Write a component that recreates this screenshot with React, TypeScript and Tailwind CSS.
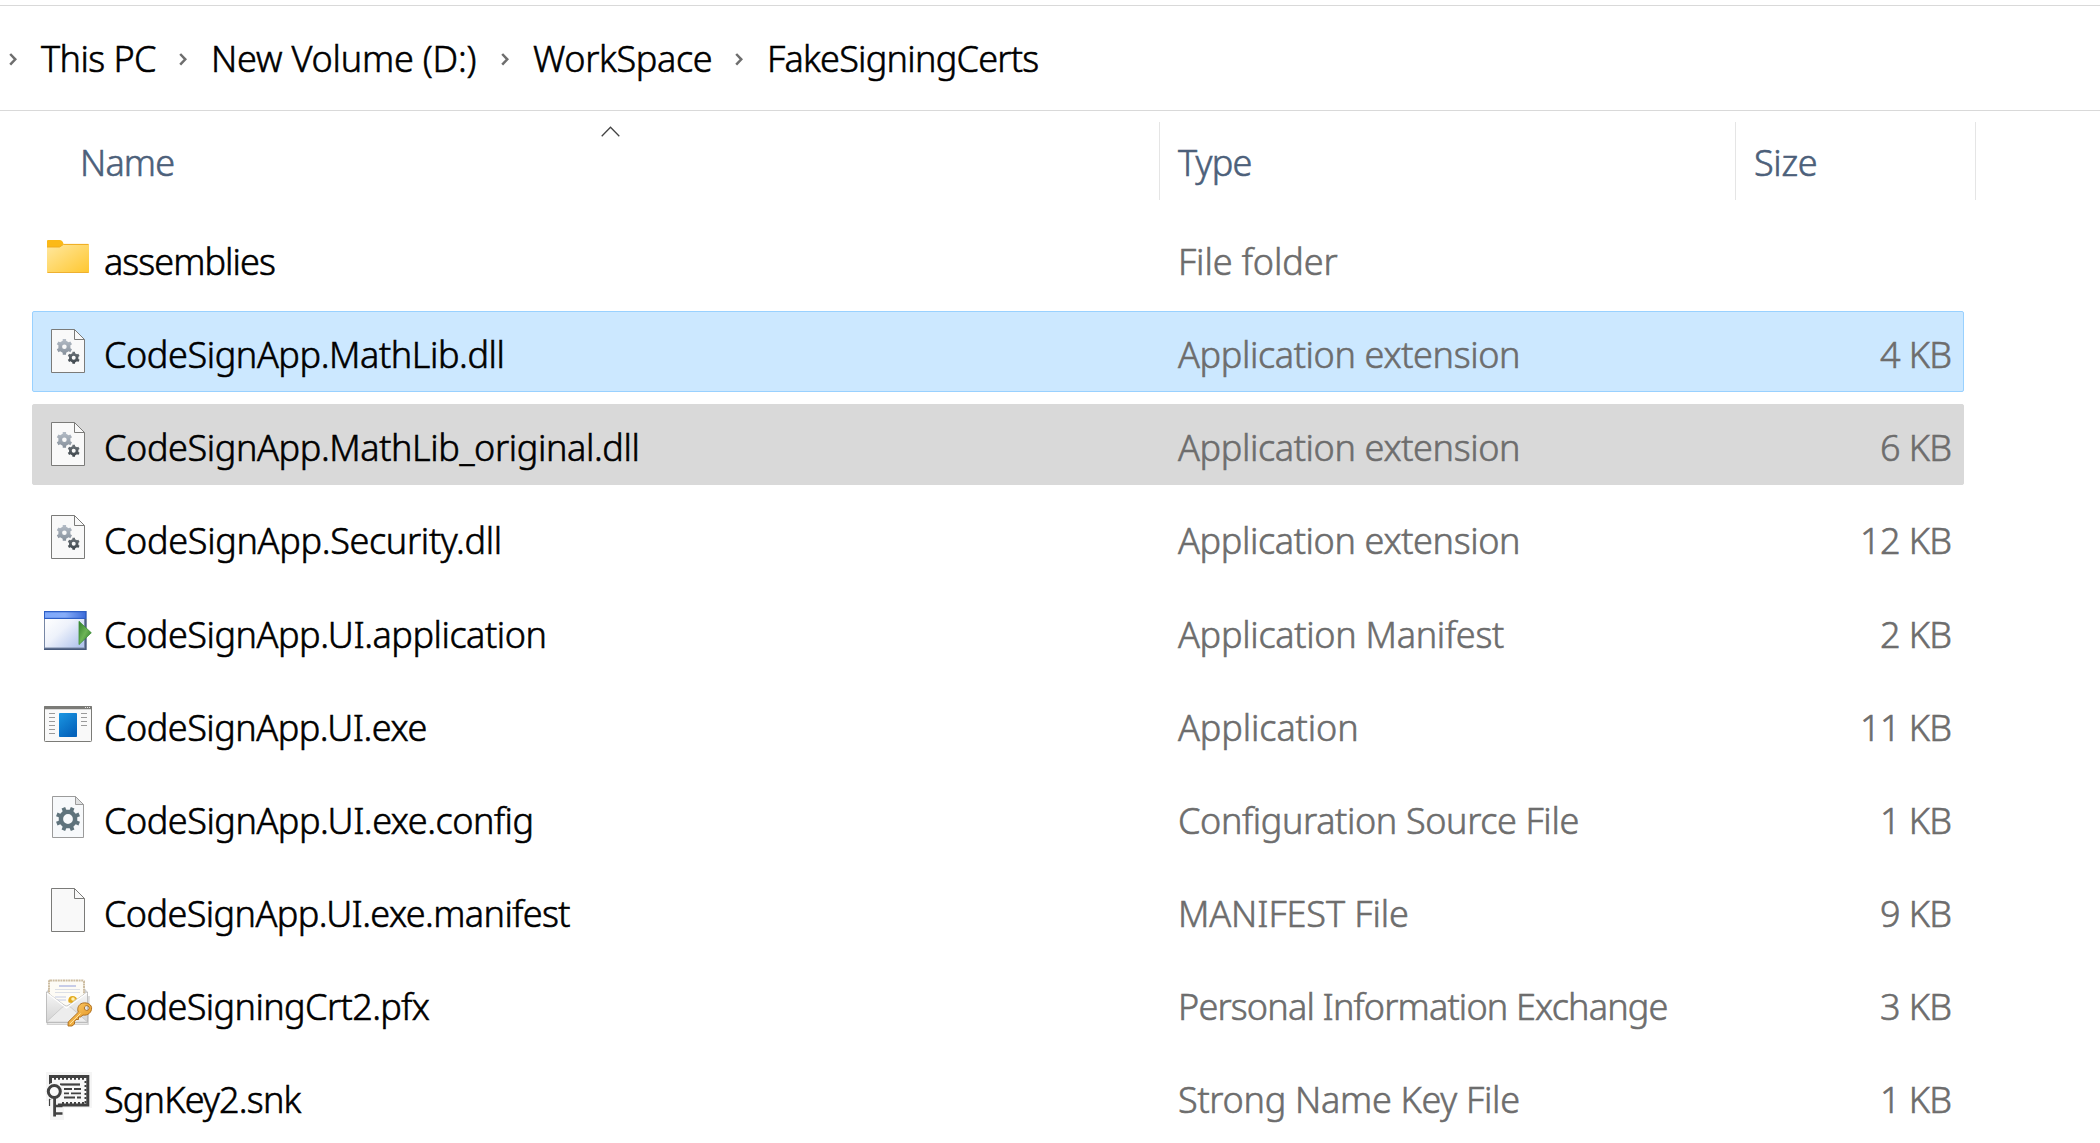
import type { ReactNode } from "react";

function gearPath(cx: number, cy: number, teeth: number, outer: number, root: number, hole: number, turn = 0) {
  const step = (Math.PI * 2) / teeth;
  const pts: string[] = [];
  for (let i = 0; i < teeth; i++) {
    const a = turn + i * step - Math.PI / 2;
    const corners: [number, number][] = [
      [a - step * 0.27, root],
      [a - step * 0.2, outer],
      [a + step * 0.2, outer],
      [a + step * 0.27, root],
    ];
    corners.forEach(([t, r]) => pts.push(`${(cx + Math.cos(t) * r).toFixed(2)} ${(cy + Math.sin(t) * r).toFixed(2)}`));
  }
  return `M${pts.join("L")}Z M${cx - hole} ${cy}a${hole} ${hole} 0 1 0 ${hole * 2} 0a${hole} ${hole} 0 1 0 ${-hole * 2} 0Z`;
}

function Icon({ children }: { children: ReactNode }) {
  return (
    <svg viewBox="0 0 54 79" width="54" height="79" className="shrink-0" fill="none">
      {children}
    </svg>
  );
}

function FolderIcon() {
  return (
    <Icon>
      <defs>
        <linearGradient id="folder" x1="0" y1="0" x2="1" y2="1">
          <stop offset="0" stopColor="#ffe8a0" />
          <stop offset="1" stopColor="#ffc72f" />
        </linearGradient>
      </defs>
      <path d="M5 22a1 1 0 0 1 1-1h11.500c2 0 3.500 1.500 4 4v4H5z" fill="#fbb917" />
      <path d="M5 28h12.500l4-3H46a1 1 0 0 1 1 1v27a1 1 0 0 1-1 1H6a1 1 0 0 1-1-1z" fill="url(#folder)" />
      <path d="M5 28h12.500l4-2.600H46.500" stroke="#efab1c" />
      <path d="M5.500 53.500H46.500" stroke="#eeb030" />
    </Icon>
  );
}

function Page() {
  return (
    <>
      <path d="M9.500 17.500H32.500L42.500 27.500V60.500H9.500Z" fill="#f9f9f9" stroke="#7b7b79" />
      <path d="M32.500 17.500V27.500H42.500" stroke="#7b7b79" />
    </>
  );
}

function FileIcon() {
  return (
    <Icon>
      <Page />
    </Icon>
  );
}

function DllIcon() {
  return (
    <Icon>
      <defs>
        <linearGradient id="gearLight" x1="0" y1="0" x2="0" y2="1">
          <stop offset="0" stopColor="#b4bcc6" />
          <stop offset="1" stopColor="#87919c" />
        </linearGradient>
        <linearGradient id="gearDark" x1="0" y1="0" x2="0" y2="1">
          <stop offset="0" stopColor="#6b7278" />
          <stop offset="1" stopColor="#3d454b" />
        </linearGradient>
      </defs>
      <Page />
      <path d={gearPath(22.4, 34.8, 6, 8, 6.2, 2.3)} fill="url(#gearLight)" fillRule="evenodd" />
      <path d={gearPath(31.7, 45.8, 6, 6.2, 4.8, 2)} fill="url(#gearDark)" fillRule="evenodd" />
    </Icon>
  );
}

function ManifestAppIcon() {
  return (
    <Icon>
      <defs>
        <linearGradient id="winBar" x1="0" y1="0" x2="1" y2="0">
          <stop offset="0" stopColor="#7fa9fb" />
          <stop offset="0.5" stopColor="#86acf8" />
          <stop offset="1" stopColor="#3f6edb" />
        </linearGradient>
        <linearGradient id="winBody" x1="0" y1="0" x2="1" y2="0.8">
          <stop offset="0" stopColor="#ffffff" />
          <stop offset="0.45" stopColor="#eef2fb" />
          <stop offset="1" stopColor="#b4c6ee" />
        </linearGradient>
        <linearGradient id="play" x1="0" y1="0" x2="1" y2="1">
          <stop offset="0" stopColor="#2f7d2a" />
          <stop offset="0.5" stopColor="#6db556" />
          <stop offset="1" stopColor="#1f6a1c" />
        </linearGradient>
      </defs>
      <rect x="2" y="19" width="42.500" height="39" fill="#7787a5" />
      <rect x="2" y="19" width="42.500" height="8" fill="#2e5fc6" />
      <rect x="3" y="20.300" width="40" height="5.500" fill="url(#winBar)" />
      <rect x="3" y="27" width="39" height="28.500" fill="url(#winBody)" />
      <path d="M43.800 27V57.300H2" stroke="#47597b" strokeWidth="1.400" />
      <path d="M37 29.300L49.300 40.800L37 52.600Z" fill="url(#play)" stroke="#3e9138" strokeWidth="0.800" />
    </Icon>
  );
}

function ExeIcon() {
  return (
    <Icon>
      <defs>
        <linearGradient id="exeBlue" x1="0" y1="0" x2="0.600" y2="1">
          <stop offset="0" stopColor="#1a96e2" />
          <stop offset="1" stopColor="#0563bb" />
        </linearGradient>
      </defs>
      <rect x="2.500" y="21.500" width="47" height="35" rx="0.800" fill="#f9f9f9" stroke="#7b7b77" />
      <rect x="2" y="21" width="48" height="3.200" rx="0.800" fill="#7b7b77" />
      <path d="M43 22.500h1m1 0h1m1 0h1" stroke="#e8e8e8" />
      <rect x="17" y="28" width="18" height="24" rx="0.800" fill="url(#exeBlue)" />
      <path d="M7 28.500h6m-6 4h6m-6 4h6m-6 4h6m-6 4h6m-6 4h6M39 28.500h6m-6 4h6m-6 4h6m-6 4h6" stroke="#9a9a9a" />
    </Icon>
  );
}

function ConfigIcon() {
  return (
    <Icon>
      <path d="M10.500 18.500H33.500L41.500 26.500V59.500H10.500Z" fill="#f7f9fb" stroke="#9b9b9b" />
      <path d="M33.500 18.500V26.500H41.500Z" fill="#dfe1e2" stroke="#9b9b9b" />
      <path d={gearPath(26, 41, 8, 12.3, 9.4, 4.9, Math.PI / 8)} fill="#5f737c" fillRule="evenodd" />
    </Icon>
  );
}

function PfxIcon() {
  return (
    <Icon>
      <defs>
        <linearGradient id="envelope" x1="0" y1="0" x2="0" y2="1">
          <stop offset="0" stopColor="#f7f7f7" />
          <stop offset="1" stopColor="#d2d2d2" />
        </linearGradient>
        <linearGradient id="goldKey" x1="0" y1="0" x2="1" y2="1">
          <stop offset="0" stopColor="#ffd070" />
          <stop offset="1" stopColor="#e08d16" />
        </linearGradient>
      </defs>
      <path d="M5.500 57L5.500 60.300H46L47 32" stroke="#b5b5b5" strokeOpacity="0.600" strokeWidth="1.500" />
      <path d="M4.500 28L7 24V55H42.500V24L45.500 28V58.500H4.500Z" fill="#cfcfcf" />
      <rect x="7" y="16.500" width="35" height="36" rx="1" fill="#fdfbf5" stroke="#cdbda2" strokeWidth="2" strokeDasharray="2 0.600" />
      <path d="M17 22H34" stroke="#a3aee0" strokeWidth="1.200" />
      <path d="M13 25.500H38M13 28.500H38" stroke="#dcdfe6" />
      <path d="M13 33H24M13 36H24" stroke="#c4cbe6" strokeWidth="1.200" />
      <path d="M4.500 28L20 39.500L24.500 42.500L29 39.500L45.500 28V58.500H4.500Z" fill="url(#envelope)" stroke="#b4b4b4" strokeWidth="0.800" />
      <path d="M5 57.500L20 43.500Q24.500 40 29 43.500L45 57.500" fill="#ededed" stroke="#c5c5c5" strokeWidth="0.800" />
      <path d="M5 29L24.500 44L45 29" stroke="#ffffff" strokeWidth="1.200" />
      <path d="M26.700 38.500A4.500 4.500 0 1 1 35 34.500L29.500 39Z" fill="#e2a91c" />
      <circle cx="31" cy="35" r="1.800" fill="#fff0b2" />
      <path
        fillRule="evenodd"
        d="M39 39.700C43 37.600 49.200 39.600 49.600 43.600C50 48.500 45.500 52 41 51L38.500 53H36.500V55.500H34L32.500 57.500V60L30 62H26L26.200 58L36.300 48.200C35 45 36 41.500 39 39.700Z M43.500 42a2.400 2.400 0 1 0 3.600 2.600a2.400 2.400 0 0 0-3.600-2.600Z"
        fill="url(#goldKey)"
        stroke="#a8691a"
        strokeWidth="0.900"
      />
      <path d="M28 60L38.500 49.500" stroke="#ffe2a0" strokeWidth="1" />
    </Icon>
  );
}

function SnkIcon() {
  return (
    <Icon>
      <path d="M4 15H50V51H22V63H8V44H4Z" fill="#f5f5f5" />
      <rect x="8.500" y="19.500" width="37.300" height="28.500" fill="#f8f8f8" stroke="#414141" strokeWidth="3" />
      <path d="M12 21.700H43" stroke="#414141" strokeWidth="2" strokeDasharray="2 2" />
      <path d="M20 46H44" stroke="#414141" strokeWidth="2" strokeDasharray="2 2" />
      <path d="M43.500 24V46" stroke="#414141" strokeWidth="2" strokeDasharray="2 2" />
      <path d="M18 27.500H38" stroke="#414141" strokeWidth="2.200" />
      <path d="M22 32H30M32 32H39M22 36.300H27M29 36.300H39M22 40.500H33M35 40.500H39" stroke="#414141" strokeWidth="1.800" />
      <path d="M7 43H17V51H21.500V62H8.500V51H7Z" fill="#f5f5f5" />
      <path d="M7.500 42V49" stroke="#414141" strokeWidth="1.200" />
      <circle cx="12.300" cy="34.500" r="9" fill="#f5f5f5" />
      <circle cx="12.300" cy="34.500" r="6" fill="#fafafa" stroke="#414141" strokeWidth="3" />
      <path d="M12.600 40V59.500" stroke="#414141" strokeWidth="2.800" />
      <path d="M13 49H20.500M13 56.500H20.500" stroke="#414141" strokeWidth="2.600" />
      <path d="M16.500 46.500V50" stroke="#414141" strokeWidth="1.200" />
    </Icon>
  );
}

const crumbs = [
  { label: "This PC", box: "w-[170px] gap-6", track: "tracking-[-0.55px]" },
  { label: "New Volume (D:)", box: "w-[322px] gap-6", track: "tracking-[-0.2px]" },
  { label: "WorkSpace", box: "w-[234px] gap-6", track: "tracking-[-0.36px]" },
  { label: "FakeSigningCerts", box: "gap-6", track: "tracking-[-0.74px]" },
];

type Row = {
  name: string;
  nameTrack: string;
  type: string;
  typeTrack: string;
  size?: string;
  icon: ReactNode;
  look?: string;
};

const plain = "border-transparent";

const rows: Row[] = [
  { name: "assemblies", nameTrack: "tracking-[-0.93px]", type: "File folder", typeTrack: "tracking-[-0.1px]", icon: <FolderIcon /> },
  { name: "CodeSignApp.MathLib.dll", nameTrack: "tracking-[-0.41px]", type: "Application extension", typeTrack: "tracking-[-0.36px]", size: "4 KB", icon: <DllIcon />, look: "border-[#99d1ff] bg-[#cce8ff]" },
  { name: "CodeSignApp.MathLib_original.dll", nameTrack: "tracking-[-0.39px]", type: "Application extension", typeTrack: "tracking-[-0.36px]", size: "6 KB", icon: <DllIcon />, look: "border-[#d9d9d9] bg-[#d9d9d9]" },
  { name: "CodeSignApp.Security.dll", nameTrack: "tracking-[-0.32px]", type: "Application extension", typeTrack: "tracking-[-0.36px]", size: "12 KB", icon: <DllIcon /> },
  { name: "CodeSignApp.UI.application", nameTrack: "tracking-[-0.45px]", type: "Application Manifest", typeTrack: "tracking-[-0.28px]", size: "2 KB", icon: <ManifestAppIcon />, look: "mt-px border-transparent" },
  { name: "CodeSignApp.UI.exe", nameTrack: "tracking-[-0.49px]", type: "Application", typeTrack: "tracking-[-0.09px]", size: "11 KB", icon: <ExeIcon /> },
  { name: "CodeSignApp.UI.exe.config", nameTrack: "tracking-[-0.47px]", type: "Configuration Source File", typeTrack: "tracking-[-0.37px]", size: "1 KB", icon: <ConfigIcon /> },
  { name: "CodeSignApp.UI.exe.manifest", nameTrack: "tracking-[-0.59px]", type: "MANIFEST File", typeTrack: "tracking-[-0.08px]", size: "9 KB", icon: <FileIcon /> },
  { name: "CodeSigningCrt2.pfx", nameTrack: "tracking-[-0.59px]", type: "Personal Information Exchange", typeTrack: "tracking-[-0.82px]", size: "3 KB", icon: <PfxIcon /> },
  { name: "SgnKey2.snk", nameTrack: "tracking-[-0.8px]", type: "Strong Name Key File", typeTrack: "tracking-[-0.28px]", size: "1 KB", icon: <SnkIcon /> },
];

export default function App() {
  return (
    <div className="h-[1143px] w-[2100px] overflow-hidden bg-white pt-[5px] font-['Noto_Sans',sans-serif] text-[36px] leading-[49px] font-light whitespace-nowrap [-webkit-text-stroke:0.6px_currentColor]">
      <nav className="flex h-[106px] border-y border-[#d9d9d9] pt-7 pl-[9px] text-black">
        {crumbs.map((c) => (
          <div key={c.label} className={`flex ${c.box}`}>
            <svg viewBox="0 0 8 13" width="8" height="13" className="mt-[19px] shrink-0" fill="none">
              <path d="M1.200 1L6.300 6.300L1.200 11.600" stroke="#6e6e6e" strokeWidth="2.500" />
            </svg>
            <span className={c.track}>{c.label}</span>
          </div>
        ))}
      </nav>

      <div className="flex h-[107px] pt-[11px] text-[#4c607a]">
        <div className="relative h-[78px] w-[1159px] pt-4 pl-20">
          <span className="tracking-[-0.85px]">Name</span>
          <svg viewBox="0 0 19 11" width="19" height="11" className="absolute top-1 left-[601px]" fill="none">
            <path d="M0.700 10.200L9.500 1.200L18.300 10.200" stroke="#444444" strokeWidth="1.300" />
          </svg>
        </div>
        <div className="h-[78px] w-[576px] border-l border-[#e5e5e5] pt-4 pl-[18px]">
          <span className="tracking-[-0.8px]">Type</span>
        </div>
        <div className="h-[78px] w-[241px] border-x border-[#e5e5e5] pt-4 pl-[18px]">
          <span className="tracking-[-0.3px]">Size</span>
        </div>
      </div>

      <div className="flex flex-col gap-3 pl-8">
        {rows.map((r) => (
          <div key={r.name} className={`flex h-[81px] w-[1932px] shrink-0 rounded-[2px] border pl-[9px] ${r.look ?? plain}`}>
            {r.icon}
            <span className={`w-[1082px] pt-[18px] pl-2 text-black ${r.nameTrack}`}>{r.name}</span>
            <span className={`w-[575px] pt-[18px] text-[#6d6d6d] ${r.typeTrack}`}>{r.type}</span>
            <span className="grow pt-[18px] pr-[11.500px] text-right tracking-[-0.6px] text-[#6d6d6d]">{r.size}</span>
          </div>
        ))}
      </div>
    </div>
  );
}
